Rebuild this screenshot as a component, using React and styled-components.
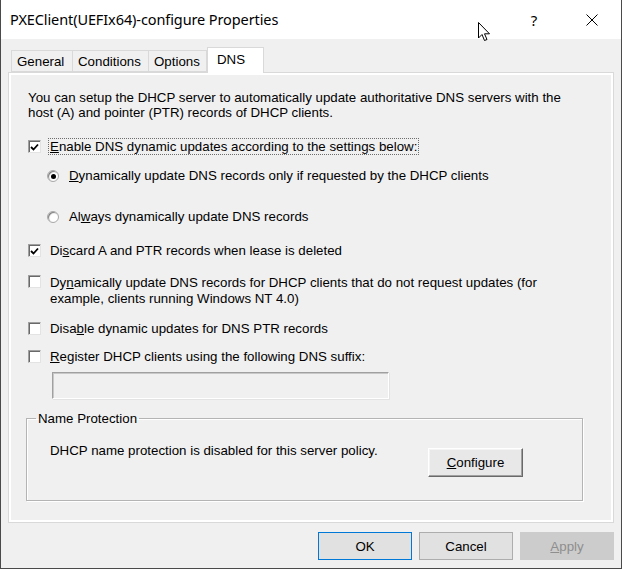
import React from "react";
import styled, { createGlobalStyle } from "styled-components";

const GlobalStyle = createGlobalStyle`
  html, body { margin: 0; padding: 0; background: #ffffff; }
  * { box-sizing: border-box; }
`;

const Window = styled.div`
  width: 622px;
  height: 569px;
  display: flex;
  flex-direction: column;
  border: 1px solid #4a4a4a;
  border-top: none;
  background: #f0f0f0;
  font-family: "Liberation Sans", Arial, sans-serif;
  font-size: 13.3px;
  color: #000;
`;

const TitleBar = styled.div`
  position: relative;
  height: 39px;
  flex: none;
  display: flex;
  align-items: center;
  background: #ffffff;
  padding-left: 9px;
`;

const Title = styled.div`
  font-family: "Noto Sans", "Liberation Sans", sans-serif;
  font-size: 14.5px;
  letter-spacing: -0.1px;
  color: #000;
  margin-top: -1px;
`;

const CaptionButton = styled.div`
  width: 58px;
  height: 39px;
  display: flex;
  align-items: center;
  justify-content: center;
  font-family: "Noto Sans", sans-serif;
  font-size: 15px;
  margin-left: ${(p) => (p.$first ? "auto" : "0")};
`;

const Cursor = styled.svg`
  position: absolute;
  left: 477px;
  top: 22px;
`;

const Body = styled.div`
  flex: 1;
  display: flex;
  flex-direction: column;
  padding: 9px 7px 0 7px;
`;

const TabRow = styled.div`
  display: flex;
  align-items: flex-end;
  height: 25px;
  padding-left: 3px;
  margin-bottom: -1px;
  position: relative;
  z-index: 1;
`;

const Tab = styled.div`
  height: ${(p) => (p.$active ? "26px" : "22px")};
  width: ${(p) => p.$w}px;
  padding-left: ${(p) => (p.$active ? "9px" : "5px")};
  display: flex;
  align-items: center;
  background: ${(p) => (p.$active ? "#ffffff" : "#f0f0f0")};
  border: 1px solid #d9d9d9;
  border-bottom: ${(p) => (p.$active ? "none" : "1px solid #d9d9d9")};
  border-right: ${(p) => (p.$active || p.$last ? "1px solid #d9d9d9" : "none")};
  padding-bottom: ${(p) => (p.$active ? "2px" : "0")};
  margin-bottom: ${(p) => (p.$active ? "0" : "1px")};
`;

const Panel = styled.div`
  height: 451px;
  flex: none;
  border: 1px solid #d9d9d9;
  box-shadow: inset 0 0 0 2px #ffffff;
  background: #f0f0f0;
  padding: 17px 30px 0 19px;
  display: flex;
  flex-direction: column;
`;

const Intro = styled.div`
  line-height: 15px;
  white-space: nowrap;
`;

const Row = styled.div`
  display: flex;
  align-items: flex-start;
  margin-top: ${(p) => p.$mt}px;
  margin-left: ${(p) => p.$indent || 0}px;
  line-height: ${(p) => p.$lh || 17}px;
`;

const Box = styled.span`
  flex: none;
  width: 13px;
  height: 13px;
  margin-top: ${(p) => p.$top || 2}px;
  margin-right: 8px;
  background: #ffffff;
  border: 1px solid;
  border-color: #a0a0a0 #e3e3e3 #e3e3e3 #a0a0a0;
  box-shadow: inset 1px 1px 0 #696969;
  display: flex;
  align-items: center;
  justify-content: center;
`;

const Radio = styled.span`
  flex: none;
  width: 12px;
  height: 12px;
  margin-top: 3px;
  margin-right: 9px;
  border-radius: 50%;
  background: #ffffff;
  border: 1px solid #a8a8a8;
  box-shadow: inset 1px 1px 1px #7a7a7a;
  display: flex;
  align-items: center;
  justify-content: center;
  &::after {
    content: "";
    display: ${(p) => (p.$on ? "block" : "none")};
    width: 5px;
    height: 5px;
    border-radius: 50%;
    background: #000;
  }
`;

const Label = styled.span`
  white-space: nowrap;
  padding: 0 1px;
  margin-left: -1px;
  border: 1px dotted ${(p) => (p.$focus ? "#6d6d6d" : "transparent")};
  line-height: ${(p) => p.$lh || 15}px;
`;

const TextBox = styled.div`
  margin-top: 7px;
  margin-left: 24px;
  width: 337px;
  height: 27px;
  background: #f0f0f0;
  border: 1px solid;
  border-color: #a0a0a0 #ffffff #ffffff #a0a0a0;
  box-shadow: inset 1px 1px 0 #c8c8c8, 1px 1px 0 #e3e3e3;
`;

const Group = styled.fieldset`
  margin: 11px 0 0 -2px;
  padding: 0 59px 23px 23px;
  border: 1px solid #b4b4b4;
  box-shadow: 1px 1px 0 #ffffff, inset 1px 1px 0 #ffffff;
  min-width: 0;
`;

const Legend = styled.legend`
  margin-left: -14px;
  padding: 0 2px;
  line-height: 17px;
`;

const GroupInner = styled.div`
  display: flex;
  justify-content: space-between;
  align-items: flex-start;
`;

const GroupText = styled.div`
  margin-top: 16px;
  line-height: 15px;
`;

const ClassicButton = styled.div`
  margin-top: 21px;
  width: 95px;
  height: 29px;
  display: flex;
  align-items: center;
  justify-content: center;
  background: #e8e8e8;
  border: 1px solid;
  border-color: #ffffff #696969 #696969 #ffffff;
  box-shadow: inset -1px -1px 0 #a0a0a0, inset 1px 1px 0 #f4f4f4;
`;

const Footer = styled.div`
  display: flex;
  justify-content: flex-end;
  gap: 7px;
  margin-top: 9px;
`;

const Button = styled.div`
  width: 94px;
  height: 28px;
  display: flex;
  align-items: center;
  justify-content: center;
  background: ${(p) => (p.$disabled ? "#cccccc" : "#e1e1e1")};
  color: ${(p) => (p.$disabled ? "#8e8e8e" : "#000")};
  border: 1px solid ${(p) => (p.$default ? "#0078d7" : p.$disabled ? "#cccccc" : "#adadad")};
`;

const Check = () => (
  <svg width="9" height="8" viewBox="0 0 9 8">
    <path d="M1 4 L3.5 6.5 L8 1.5" stroke="#000" strokeWidth="1.8" fill="none" />
  </svg>
);

export default function App() {
  return (
    <>
      <GlobalStyle />
      <Window>
        <TitleBar>
          <Title>PXEClient(UEFIx64)-configure Properties</Title>
          <CaptionButton $first>?</CaptionButton>
          <CaptionButton>
            <svg width="12" height="12" viewBox="0 0 12 12">
              <path d="M0.5 0.5 L11.5 11.5 M11.5 0.5 L0.5 11.5" stroke="#000" strokeWidth="1" />
            </svg>
          </CaptionButton>
          <Cursor width="13" height="20" viewBox="0 0 13 20">
            <path
              d="M0.5 0.5 L0.5 16 L4 12.5 L6.5 18.5 L9 17.5 L6.5 11.8 L11.5 11.8 Z"
              fill="#ffffff"
              stroke="#000"
              strokeWidth="1"
              strokeLinejoin="round"
            />
          </Cursor>
        </TitleBar>
        <Body>
          <TabRow>
            <Tab $w={61}>General</Tab>
            <Tab $w={76}>Conditions</Tab>
            <Tab $w={59} $last>Options</Tab>
            <Tab $w={57} $active>DNS</Tab>
          </TabRow>
          <Panel>
            <Intro>
              You can setup the DHCP server to automatically update authoritative DNS servers with the
              <br />
              host (A) and pointer (PTR) records of DHCP clients.
            </Intro>
            <Row $mt={18}>
              <Box><Check /></Box>
              <Label $focus>
                <u>E</u>nable DNS dynamic updates according to the settings below:
              </Label>
            </Row>
            <Row $mt={12} $indent={19}>
              <Radio $on />
              <Label>
                <u>D</u>ynamically update DNS records only if requested by the DHCP clients
              </Label>
            </Row>
            <Row $mt={24} $indent={19}>
              <Radio />
              <Label>
                Al<u>w</u>ays dynamically update DNS records
              </Label>
            </Row>
            <Row $mt={17}>
              <Box><Check /></Box>
              <Label>
                Di<u>s</u>card A and PTR records when lease is deleted
              </Label>
            </Row>
            <Row $mt={15} $lh={16}>
              <Box $top={1} />
              <Label $lh={16}>
                Dy<u>n</u>amically update DNS records for DHCP clients that do not request updates (for
                <br />
                example, clients running Windows NT 4.0)
              </Label>
            </Row>
            <Row $mt={12}>
              <Box />
              <Label>
                Disa<u>b</u>le dynamic updates for DNS PTR records
              </Label>
            </Row>
            <Row $mt={11}>
              <Box />
              <Label>
                <u>R</u>egister DHCP clients using the following DNS suffix:
              </Label>
            </Row>
            <TextBox />
            <Group>
              <Legend>Name Protection</Legend>
              <GroupInner>
                <GroupText>DHCP name protection is disabled for this server policy.</GroupText>
                <ClassicButton>
                  <span>
                    <u>C</u>onfigure
                  </span>
                </ClassicButton>
              </GroupInner>
            </Group>
          </Panel>
          <Footer>
            <Button $default>OK</Button>
            <Button>Cancel</Button>
            <Button $disabled>
              <span>
                <u>A</u>pply
              </span>
            </Button>
          </Footer>
        </Body>
      </Window>
    </>
  );
}
